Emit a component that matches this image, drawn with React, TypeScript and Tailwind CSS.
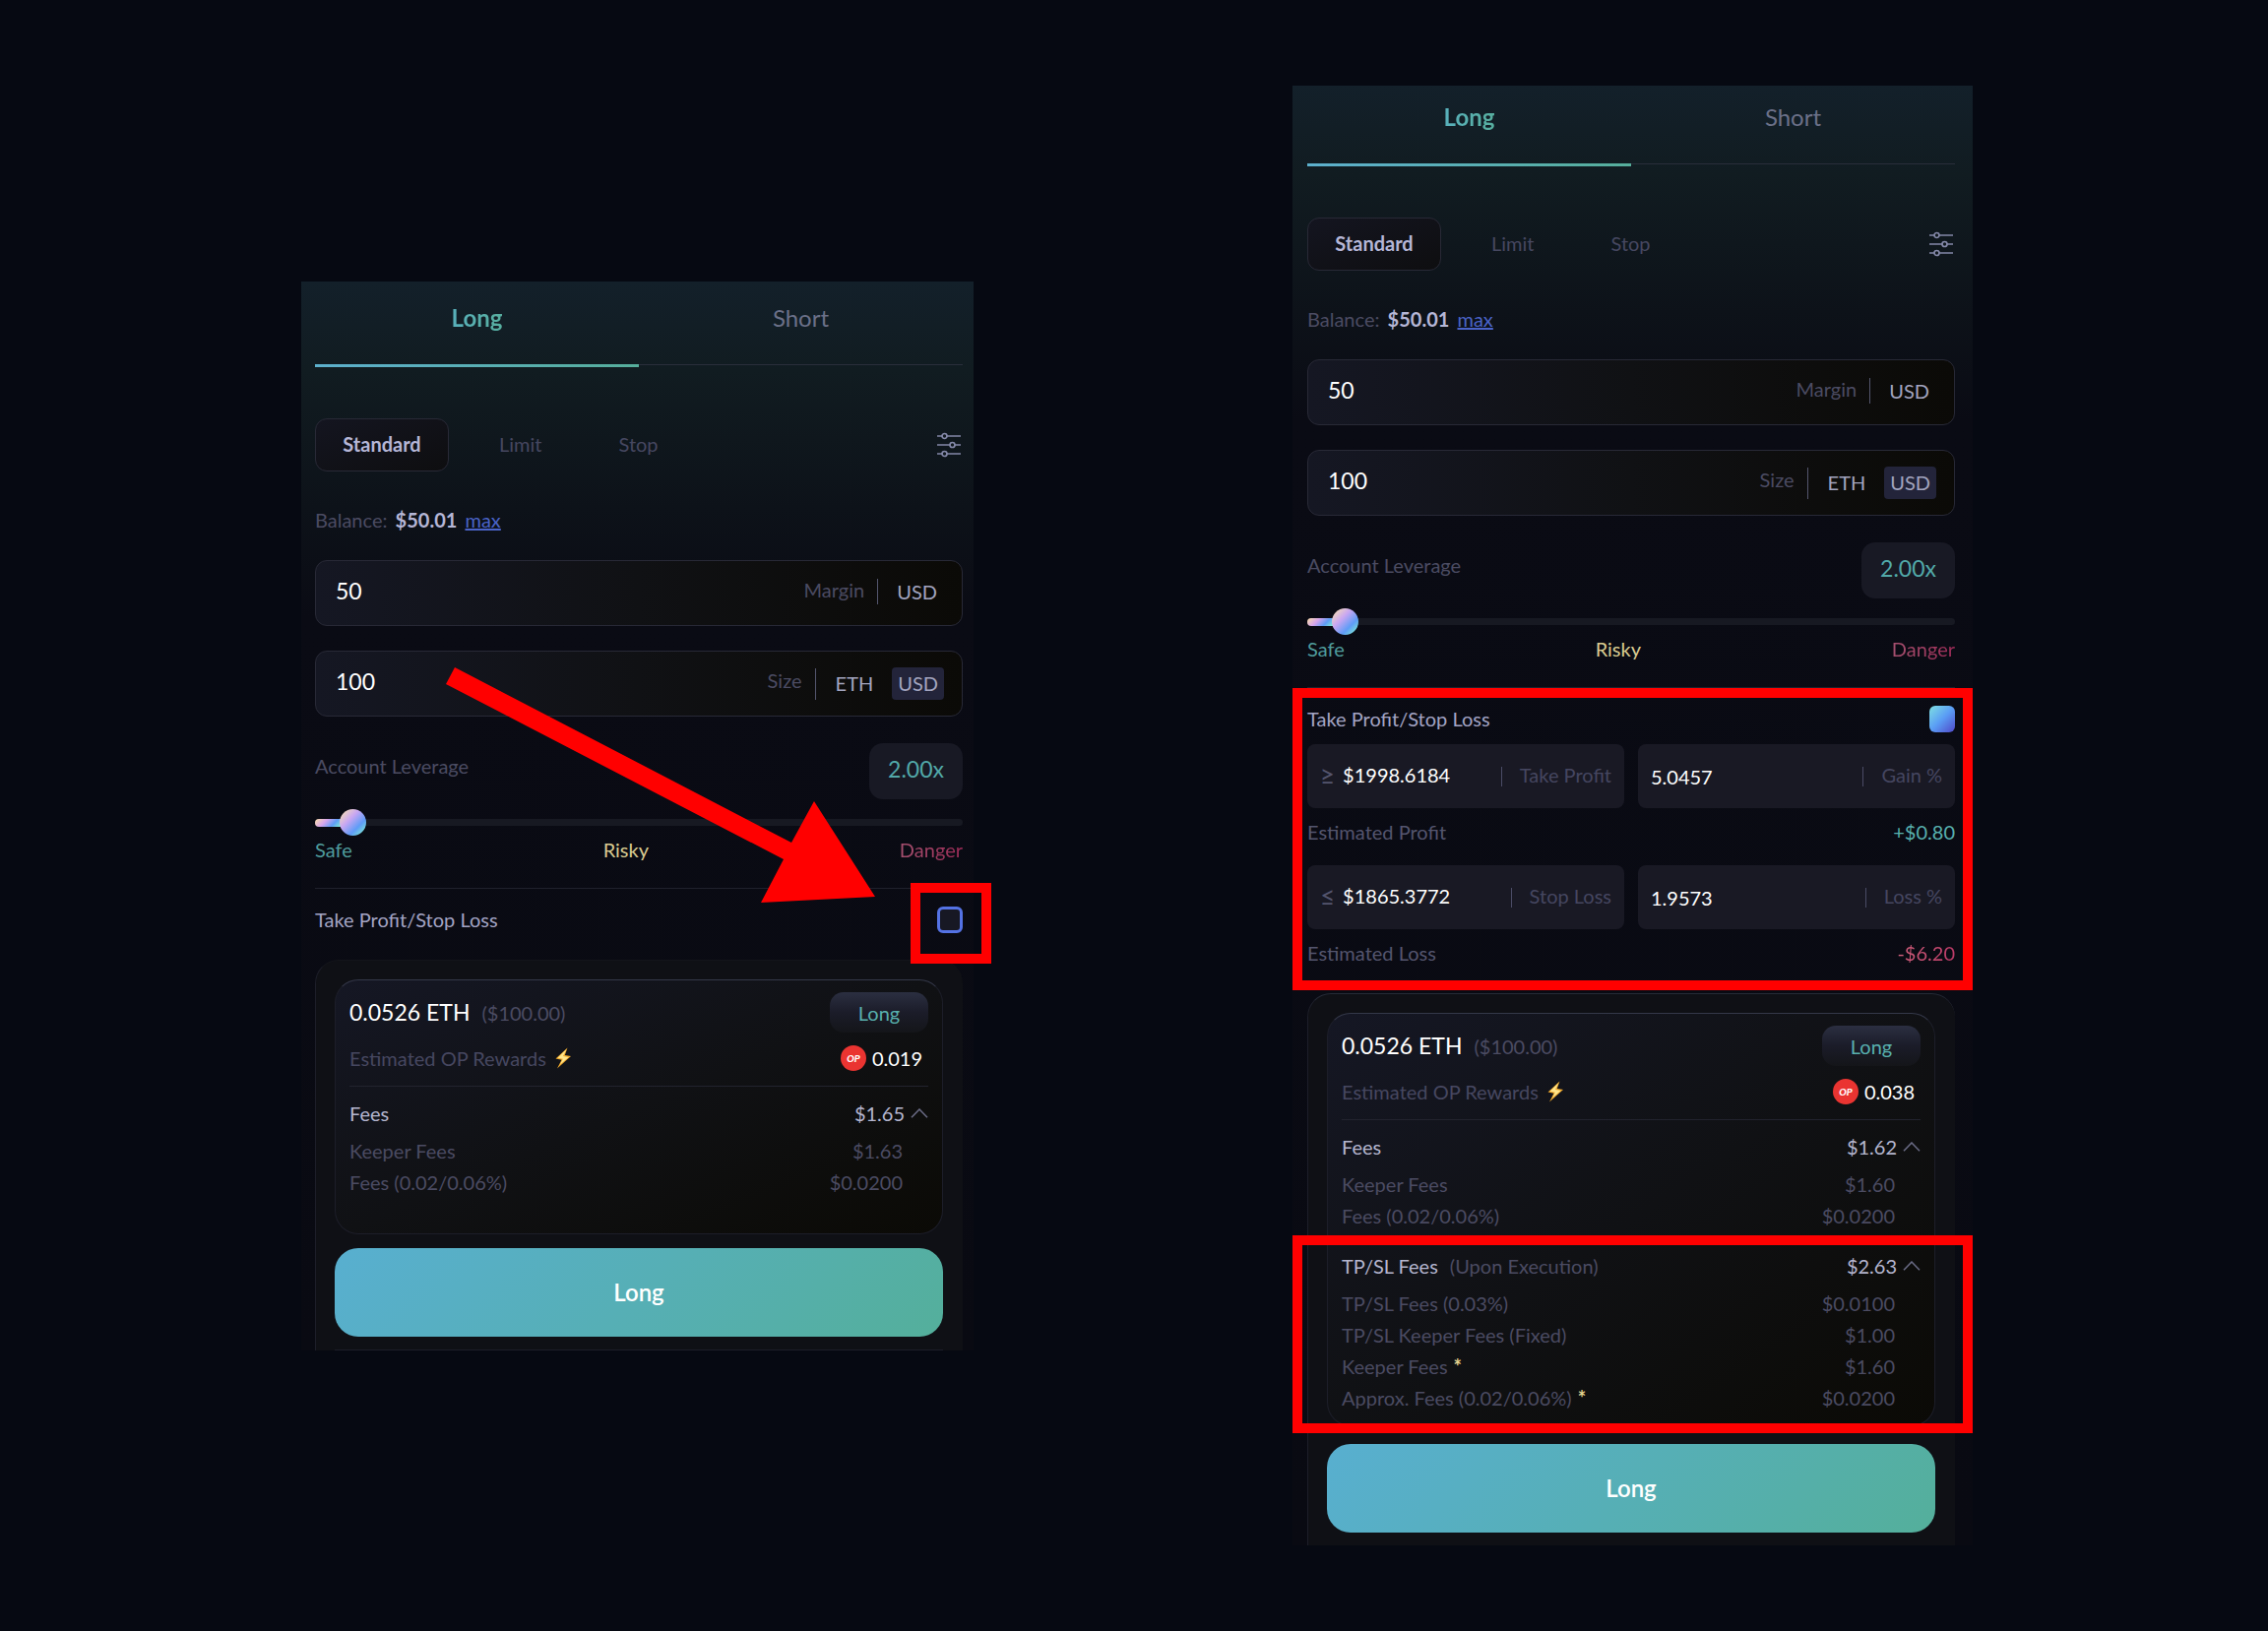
import { useId, useState } from "react";
import clsx from "clsx";

type FeeLine = { label: string; value: string; starred?: boolean };

type PanelProps = {
  className?: string;
  balance: string;
  rewards: string;
  feesTotal: string;
  fees: FeeLine[];
  withOrders?: boolean;
};

const tpslFees: FeeLine[] = [
  { label: "TP/SL Fees (0.03%)", value: "$0.0100" },
  { label: "TP/SL Keeper Fees (Fixed)", value: "$1.00" },
  { label: "Keeper Fees", value: "$1.60", starred: true },
  { label: "Approx. Fees (0.02/0.06%)", value: "$0.0200", starred: true },
];

function SlidersIcon() {
  return (
    <svg width="24" height="26" viewBox="0 0 24 26" fill="none" stroke="#8488a8" strokeWidth="1.7" aria-hidden="true">
      <path d="M0 4h5M10 4h14M0 13h13M18 13h6M0 22h5M10 22h14" />
      <circle cx="7.5" cy="4" r="2.5" />
      <circle cx="15.5" cy="13" r="2.5" />
      <circle cx="7.5" cy="22" r="2.5" />
    </svg>
  );
}

function BoltIcon() {
  return (
    <svg width="18" height="22" viewBox="0 0 18 22" aria-hidden="true">
      <path d="M13.5 0.5 1.5 11.5l6 1.2L3 21.5 17 9l-6.2-1z" fill="#f0a92c" />
      <path d="M12.4 2 3.6 10.7l5.2 1L6 17.4 14.6 10l-5.6-1z" fill="#ffe68c" />
    </svg>
  );
}

function ChevronUp() {
  return (
    <svg width="18" height="10" viewBox="0 0 18 10" fill="none" stroke="#6b6c86" strokeWidth="1.5" aria-hidden="true">
      <path d="M1 9.2 9 1l8 8.2" />
    </svg>
  );
}

function OpBadge() {
  return (
    <span className="flex size-[26px] items-center justify-center rounded-full bg-[#ea3431] text-[10px] font-black italic text-white">
      OP
    </span>
  );
}

function Highlight({ className }: { className: string }) {
  return <div className={clsx("pointer-events-none absolute z-10 border-10 border-[#ff0000]", className)} />;
}

function AmountField({
  label,
  value,
  units,
}: {
  label: string;
  value: string;
  units: string[];
}) {
  const id = useId();
  return (
    <div className="flex h-[67px] items-center rounded-xl border border-[#282936] bg-linear-to-r from-[#151723] via-[#101114] to-[#0b0a07] pr-[18px] pl-5">
      <input
        id={id}
        defaultValue={value}
        className="min-w-0 flex-1 bg-transparent pb-1 text-[23px] text-white outline-none"
      />
      <label htmlFor={id} className="mr-[13px] pb-2 text-[#4b4b62]">
        {label}
      </label>
      <span className={clsx("w-px bg-[#54566e]", units.length > 1 ? "h-8" : "mb-1 h-[26px]")} />
      {units.length > 1 ? (
        <div className="ml-[14px] flex gap-[13px]">
          {units.map((unit) => (
            <button
              key={unit}
              type="button"
              className={clsx(
                "h-[33px] rounded-sm px-[6px] pb-0.5 text-[#a2a4bf]",
                unit === "USD" && "bg-[#23243a]",
              )}
            >
              {unit}
            </button>
          ))}
        </div>
      ) : (
        <span className="mr-[7px] ml-[19px] pb-1 text-[#a2a4bf]">{units[0]}</span>
      )}
    </div>
  );
}

function OrderField({ label, value, sign }: { label: string; value: string; sign?: string }) {
  const id = useId();
  return (
    <div className="flex h-[65px] min-w-0 flex-1 items-center rounded-lg bg-[#191924] px-[13px]">
      {sign && <span className="mr-2 pb-0.5 text-[26px] text-[#54556e]">{sign}</span>}
      <input
        id={id}
        defaultValue={value}
        className={clsx("min-w-0 flex-1 bg-transparent text-white outline-none", sign && "pb-1")}
      />
      <span className="mr-[18px] h-5 w-px bg-[#4a4b66]" />
      <label htmlFor={id} className="pb-1 text-[#454660]">
        {label}
      </label>
    </div>
  );
}

function Leverage() {
  const [value, setValue] = useState(4);
  const id = useId();
  return (
    <section>
      <div className="mt-[27px] flex h-[57px] justify-between">
        <label htmlFor={id} className="mt-2 leading-[30px] text-[#4b4b62]">
          Account Leverage
        </label>
        <output className="flex w-[95px] items-center justify-center rounded-[14px] bg-[#181924] pb-1 text-[23px] text-[#52a9a9]">
          2.00x
        </output>
      </div>
      <div className="relative mt-2.5 flex h-[27px] items-center">
        <input
          id={id}
          type="range"
          min={0}
          max={100}
          step={0.1}
          value={value}
          onChange={(e) => setValue(Number(e.target.value))}
          className="h-[27px] w-full appearance-none bg-transparent [&::-webkit-slider-runnable-track]:h-[7px] [&::-webkit-slider-runnable-track]:rounded-full [&::-webkit-slider-runnable-track]:bg-[#171922] [&::-webkit-slider-thumb]:relative [&::-webkit-slider-thumb]:z-10 [&::-webkit-slider-thumb]:-mt-2.5 [&::-webkit-slider-thumb]:size-[27px] [&::-webkit-slider-thumb]:appearance-none [&::-webkit-slider-thumb]:rounded-full [&::-webkit-slider-thumb]:bg-[linear-gradient(135deg,#f6dcb8_8%,#c9a7f2_38%,#5f9cf7_68%,#7ff0cf_95%)]"
        />
        <span
          className="pointer-events-none absolute left-0 h-2 rounded-l-full bg-[linear-gradient(135deg,#fbe0a8,#d7a5ec_38%,#5f9cf7_70%,#7ff0cf)]"
          style={{ width: `${value}%` }}
        />
      </div>
      <div className="flex justify-between leading-7">
        <span className="text-[#4f9c9c]">Safe</span>
        <span className="text-[#d9cb91]">Risky</span>
        <span className="bg-linear-to-r from-[#a5506f] to-[#9c2b57] bg-clip-text text-transparent">Danger</span>
      </div>
    </section>
  );
}

function Orders() {
  return (
    <>
      <div className="mt-3 flex gap-[14px]">
        <OrderField sign="≥" label="Take Profit" value="$1998.6184" />
        <OrderField label="Gain %" value="5.0457" />
      </div>
      <p className="mt-2.5 flex justify-between leading-7 text-[#54556e]">
        Estimated Profit <span className="text-[#58b0ae]">+$0.80</span>
      </p>
      <div className="mt-5 flex gap-[14px]">
        <OrderField sign="≤" label="Stop Loss" value="$1865.3772" />
        <OrderField label="Loss %" value="1.9573" />
      </div>
      <p className="mt-2.5 flex justify-between leading-7 text-[#54556e]">
        Estimated Loss
        <span className="bg-linear-to-r from-[#d0607c] to-[#bb3a67] bg-clip-text text-transparent">-$6.20</span>
      </p>
    </>
  );
}

function FeeGroup({ title, note, total, lines }: { title: string; note?: string; total: string; lines: FeeLine[] }) {
  return (
    <>
      <button type="button" className="flex w-full items-center leading-7 text-[#b5b6cf]">
        <span>{title}</span>
        {note && <span className="ml-3 text-[#4b4b62]">{note}</span>}
        <span className="mr-1.5 ml-auto">{total}</span>
        <ChevronUp />
      </button>
      <dl className="mt-2 leading-8 text-[#4b4b62]">
        {lines.map((line) => (
          <div key={line.label} className="flex justify-between pr-[26px]">
            <dt>
              {line.label}
              {line.starred && <span className="ml-1.5 font-bold text-[#e5d590]">*</span>}
            </dt>
            <dd>{line.value}</dd>
          </div>
        ))}
      </dl>
    </>
  );
}

function TradePanel({ className, balance, rewards, feesTotal, fees, withOrders = false }: PanelProps) {
  const checkId = useId();
  return (
    <article
      className={clsx(
        "relative min-w-0 bg-[linear-gradient(to_bottom,#13202a_0px,#111c21_90px,#0d1219_230px,#0a0b14_340px,#090a12_100%)]",
        className,
      )}
    >
      <nav className={clsx("flex pb-8 text-2xl leading-[30px]", withOrders ? "pt-[17px]" : "pt-[22px]")}>
        <button type="button" className="flex-1 font-bold">
          <span className="bg-linear-to-r from-[#58b0bb] to-[#57ae9f] bg-clip-text text-transparent">Long</span>
        </button>
        <button type="button" className="flex-1 text-[#6b7088]">
          Short
        </button>
      </nav>
      <div className="flex">
        <span className="h-[3px] flex-1 bg-linear-to-r from-[#5db0cd] to-[#56ae9b]" />
        <span className="h-px flex-1 bg-[#2a2e3b]" />
      </div>

      <div className="mt-[52px] flex h-[54px] items-center text-[#464760]">
        <button
          type="button"
          className="h-full w-[136px] rounded-xl border border-[#282936] bg-linear-to-br from-[#141520] to-[#0e0e10] pb-0.5 font-bold text-[#b5b6d6]"
        >
          Standard
        </button>
        <button type="button" className="ml-[51px] pb-0.5">
          Limit
        </button>
        <button type="button" className="ml-[78px] pb-0.5">
          Stop
        </button>
        <button type="button" aria-label="Settings" className="mr-0.5 ml-auto">
          <SlidersIcon />
        </button>
      </div>

      <p className="mt-[34px] leading-[30px] text-[#4b4b62]">
        Balance: <span className="mx-[3px] font-bold text-[#b5b6d6]">{balance}</span>{" "}
        <a href="#max" className="text-[#4a63c8] underline">
          max
        </a>
      </p>

      <div className="mt-[26px] flex flex-col gap-[25px]">
        <AmountField label="Margin" value="50" units={["USD"]} />
        <AmountField label="Size" value="100" units={["ETH", "USD"]} />
      </div>

      <Leverage />

      <section className="relative mt-[25px] border-t border-[#1f212c] pt-[18px]">
        <div className="flex h-[27px] items-center justify-between">
          <label htmlFor={checkId} className="pb-0.5 text-[#a3a4c4]">
            Take Profit/Stop Loss
          </label>
          <span className="relative flex">
            <input
              id={checkId}
              type="checkbox"
              defaultChecked={withOrders}
              className="h-[27px] w-[26px] appearance-none rounded-md border-3 border-[#5472e4] bg-[#171824] checked:border-0 checked:bg-[linear-gradient(135deg,#7fe0e2,#5a9df5_50%,#5048c8)]"
            />
            {!withOrders && <Highlight className="-top-[24px] -right-[29px] -bottom-[31px] -left-[27px]" />}
          </span>
        </div>
        {withOrders && <Orders />}
        {withOrders && <Highlight className="top-0 -right-[18px] -bottom-6 -left-[15px]" />}
      </section>

      <section
        className={clsx(
          "mt-[27px] rounded-t-3xl border-t border-l border-l-[#1d1e29] bg-[#0f1015] pt-[19px] pr-5 pl-[19px]",
          withOrders ? "border-t-[#262a36] pb-[13px]" : "border-t-[#14151b]",
        )}
      >
        <div
          className={clsx(
            "rounded-3xl border border-[#1d1e29] border-t-[#343849] bg-linear-to-br from-[#151724] via-[#101114] to-[#0b0a06] px-[14px] pt-3",
            withOrders ? "pb-3" : "pb-9",
          )}
        >
          <div className="flex items-center">
            <h2 className="text-[23px] text-white">0.0526 ETH</h2>
            <span className="ml-3 text-[#4b4b62]">($100.00)</span>
            <span className="ml-auto flex h-[41px] w-[100px] items-center justify-center rounded-[14px] bg-linear-to-b from-[#2b2f41] via-[#1b1c29] to-[#141519] text-[#58b0ae]">
              Long
            </span>
          </div>
          <div className="mt-3 flex h-7 items-center gap-2">
            <span className="text-[#464760]">Estimated OP Rewards</span>
            <BoltIcon />
            <span className="mr-1.5 ml-auto flex items-center gap-1.5 text-white">
              <OpBadge />
              {rewards}
            </span>
          </div>
          <hr className="mt-[14px] mb-[13px] border-[#22232e]" />
          <FeeGroup title="Fees" total={feesTotal} lines={fees} />
          {withOrders && (
            <div className="relative mt-[21px]">
              <FeeGroup title="TP/SL Fees" note="(Upon Execution)" total="$2.63" lines={tpslFees} />
              <Highlight className="-top-[17px] -right-[53px] -bottom-5 -left-[50px]" />
            </div>
          )}
        </div>
        <button
          type="button"
          className={clsx(
            "h-[90px] w-full rounded-3xl bg-[linear-gradient(135deg,#58afd0,#54af9b)] text-2xl font-semibold text-white",
            withOrders ? "mt-[18px]" : "mt-[14px]",
          )}
        >
          Long
        </button>
        {!withOrders && <hr className="mt-[13px] border-[#1d1e29]" />}
      </section>

      {!withOrders && (
        <svg
          className="pointer-events-none absolute top-[392px] left-[147px] z-10"
          width="436"
          height="240"
          viewBox="0 0 436 240"
          aria-hidden="true"
        >
          <path d="M9 0 351 178 374 136 436 233 320 239 343 195 0 17z" fill="#ff0000" />
        </svg>
      )}
    </article>
  );
}

export default function App() {
  return (
    <main className="grid min-h-screen grid-cols-[306fr_683fr_324fr_691fr_300fr] items-start bg-[#060912] py-[87px] font-['Lato',sans-serif] text-[20px]">
      <TradePanel
        className="col-start-2 mt-[199px] pr-[11px] pl-[14px]"
        balance="$50.01"
        rewards="0.019"
        feesTotal="$1.65"
        fees={[
          { label: "Keeper Fees", value: "$1.63" },
          { label: "Fees (0.02/0.06%)", value: "$0.0200" },
        ]}
      />
      <TradePanel
        className="col-start-4 pr-[18px] pl-[15px]"
        balance="$50.01"
        rewards="0.038"
        feesTotal="$1.62"
        fees={[
          { label: "Keeper Fees", value: "$1.60" },
          { label: "Fees (0.02/0.06%)", value: "$0.0200" },
        ]}
        withOrders
      />
    </main>
  );
}
